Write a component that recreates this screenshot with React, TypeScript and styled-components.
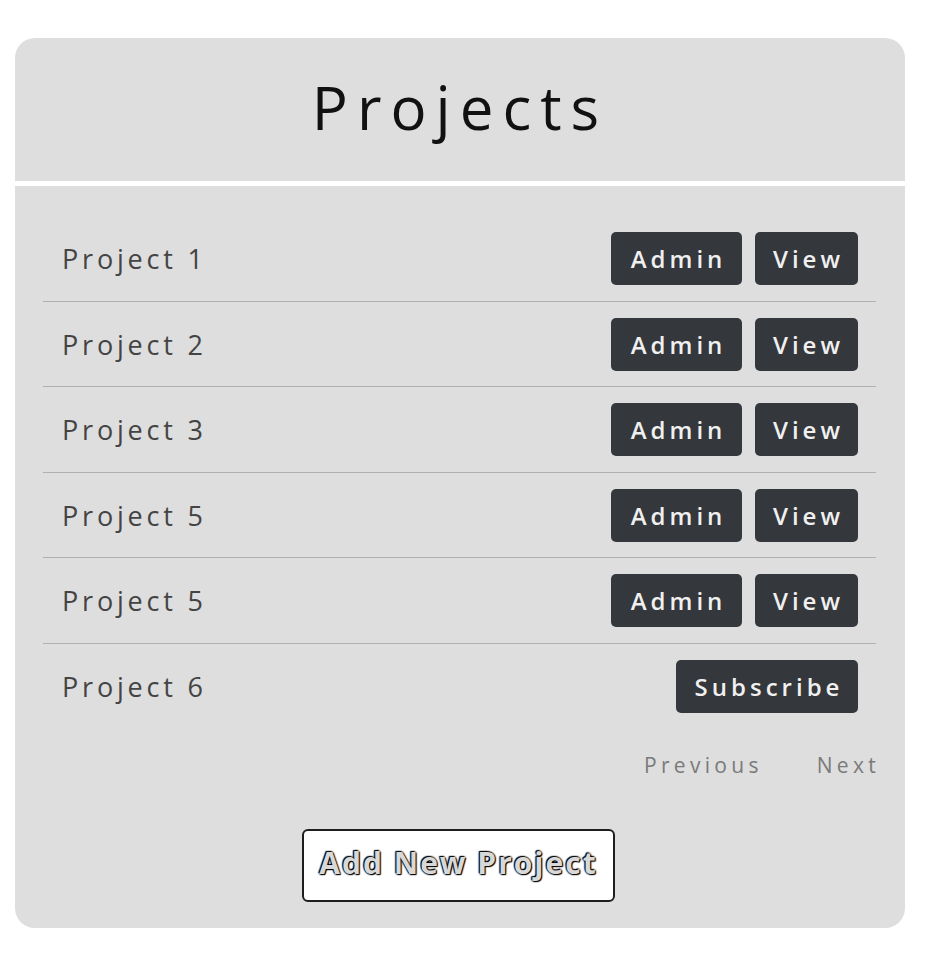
import React from "react";
import styled, { createGlobalStyle } from "styled-components";

const GlobalStyle = createGlobalStyle`
  html, body { margin: 0; padding: 0; background: #ffffff; }
  body { font-family: "Open Sans", "Liberation Sans", sans-serif; }
`;

const Page = styled.div`
  width: 932px;
  height: 954px;
  padding: 38px 0 0 15px;
  box-sizing: border-box;
`;

const Card = styled.div`
  width: 890px;
  display: flex;
  flex-direction: column;
  gap: 5px;
`;

const Header = styled.div`
  height: 143px;
  background: #dedede;
  border-radius: 20px 20px 0 0;
  display: flex;
  align-items: center;
  justify-content: center;
`;

const Title = styled.h1`
  margin: 0;
  font-weight: 400;
  font-size: 60px;
  letter-spacing: 9px;
  color: #111;
  padding: 0 0 6px 0;
`;

const Body = styled.div`
  height: 742px;
  background: #dedede;
  border-radius: 0 0 20px 20px;
  padding: 30px 29px 0 28px;
  box-sizing: border-box;
  display: flex;
  flex-direction: column;
`;

const Row = styled.div<{ $last?: boolean }>`
  display: flex;
  align-items: center;
  justify-content: space-between;
  padding: 16px 18px 15.5px 19px;
  border-bottom: ${(p) => (p.$last ? "1px solid transparent" : "1px solid #b0b0b0")};
`;

const Name = styled.span`
  font-size: 27px;
  letter-spacing: 3.8px;
  color: #444;
`;

const Actions = styled.div`
  display: flex;
  gap: 13px;
`;

const DarkButton = styled.button<{ $w: number }>`
  width: ${(p) => p.$w}px;
  height: 53px;
  border: none;
  border-radius: 5px;
  background: #34373c;
  color: #f0f0f0;
  font-family: inherit;
  font-size: 24px;
  font-weight: 600;
  letter-spacing: 4px;
  padding: 0 0 0 4px;
  cursor: pointer;
`;

const Pager = styled.div`
  display: flex;
  justify-content: flex-end;
  gap: 54px;
  margin-top: 22px;
  margin-right: -4px;
`;

const PageLink = styled.span`
  font-size: 21px;
  letter-spacing: 4.3px;
  color: #7a7a7a;
`;

const AddWrap = styled.div`
  display: flex;
  justify-content: center;
  margin-top: 50px;
  padding-right: 2px;
`;

const AddButton = styled.button`
  width: 313px;
  height: 73px;
  background: #ffffff;
  border: 2px solid #1e1e1e;
  border-radius: 6px;
  font-family: inherit;
  font-size: 30px;
  font-weight: 700;
  letter-spacing: 2px;
  color: #d8d8d8;
  text-shadow: 0 0 2px #000, 0 0 2px #000, 1px 1px 1px #000, -1px -1px 1px #000;
  padding: 0 0 6px;
  white-space: nowrap;
`;

const projects = [
  { name: "Project 1", owner: true },
  { name: "Project 2", owner: true },
  { name: "Project 3", owner: true },
  { name: "Project 5", owner: true },
  { name: "Project 5", owner: true },
  { name: "Project 6", owner: false },
];

export default function App() {
  return (
    <>
      <GlobalStyle />
      <Page>
        <Card>
          <Header>
            <Title>Projects</Title>
          </Header>
          <Body>
            {projects.map((p, i) => (
              <Row key={i} $last={i === projects.length - 1}>
                <Name>{p.name}</Name>
                <Actions>
                  {p.owner ? (
                    <>
                      <DarkButton $w={131}>Admin</DarkButton>
                      <DarkButton $w={103}>View</DarkButton>
                    </>
                  ) : (
                    <DarkButton $w={182}>Subscribe</DarkButton>
                  )}
                </Actions>
              </Row>
            ))}
            <Pager>
              <PageLink>Previous</PageLink>
              <PageLink>Next</PageLink>
            </Pager>
            <AddWrap>
              <AddButton>Add New Project</AddButton>
            </AddWrap>
          </Body>
        </Card>
      </Page>
    </>
  );
}
